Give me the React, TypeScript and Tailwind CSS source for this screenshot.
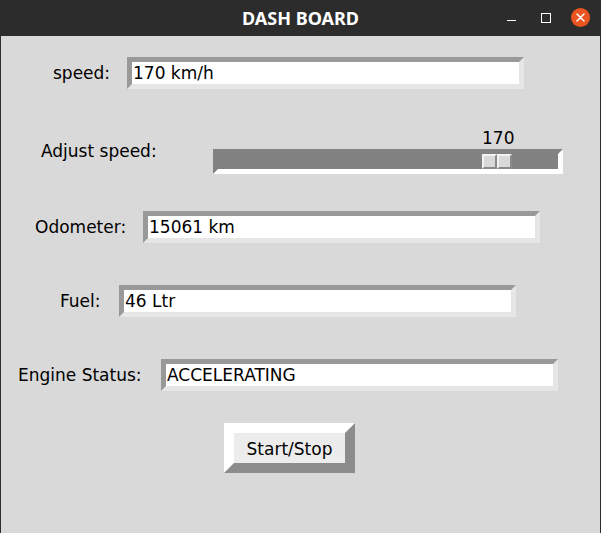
import { FC } from "react";

interface IEntryRowProps {
  label: string;
  value: string;
  top: string;
  labelBox: string;
}

const font = { fontFamily: '"DejaVu Sans", sans-serif' };

const Entry: FC<{ value: string }> = ({ value }) => (
  <div className="w-[397px] h-[32px] bg-white border-[5px] border-t-[#999999] border-l-[#999999] border-b-[#e6e6e6] border-r-[#e6e6e6] flex items-center pl-[1px] pt-[1px] text-[17px] text-black leading-none">
    {value}
  </div>
);

const EntryRow: FC<IEntryRowProps> = ({ label, value, top, labelBox }) => (
  <div className={`flex items-center ${top}`}>
    <div className={`${labelBox} pt-[1px] text-[17px] text-black leading-none`}>{label}</div>
    <Entry value={value} />
  </div>
);

const ThumbHalf = () => (
  <div className="w-[15px] h-[15px] bg-[#d9d9d9] border-[2px] border-t-[#f2f2f2] border-l-[#f2f2f2] border-b-[#8a8a8a] border-r-[#8a8a8a]" />
);

export default function App() {
  return (
    <div className="w-[601px] h-[533px] flex flex-col bg-[#2c2c2c]" style={font}>
      <div className="h-[36px] flex items-center relative shrink-0">
        <div
          className="flex-1 text-center text-white font-bold text-[18px] pt-[1px]"
          style={{ fontFamily: '"Noto Sans", "DejaVu Sans", sans-serif' }}
        >
          DASH BOARD
        </div>
        <div className="absolute right-[11px] top-[8px] flex items-center gap-[20px]">
          <div className="w-[9px] h-[1px] bg-white mt-[6px]" />
          <div className="w-[10px] h-[10px] border border-white ml-[5px]" />
          <div className="w-[19px] h-[19px] rounded-full bg-[#e95420] flex items-center justify-center">
            <svg width="9" height="9" viewBox="0 0 9 9">
              <path d="M1 1 L8 8 M8 1 L1 8" stroke="white" strokeWidth="1.5" strokeLinecap="round" />
            </svg>
          </div>
        </div>
      </div>
      <div className="flex-1 bg-[#d9d9d9] mx-[1px] flex flex-col">
        <EntryRow label="speed:" value="170 km/h" top="mt-[21px]" labelBox="w-[126px] pl-[52px]" />

        <div className="flex items-center mt-[38px]">
          <div className="w-[212px] pl-[40px] pt-[1px] text-[17px] text-black leading-none">Adjust speed:</div>
          <div className="flex flex-col">
            <div className="h-[20px] pl-[269px] pt-[1px] text-[17px] leading-[20px] text-black">170</div>
            <div className="mt-[2px] w-[350px] h-[25px] bg-[#828282] border-[5px] border-t-[#828282] border-l-[#828282] border-b-white border-r-white flex">
              <div className="ml-[264px] flex">
                <ThumbHalf />
                <ThumbHalf />
              </div>
            </div>
          </div>
        </div>

        <EntryRow label="Odometer:" value="15061 km" top="mt-[37px]" labelBox="w-[142px] pl-[34px]" />
        <EntryRow label="Fuel:" value="46 Ltr" top="mt-[42px]" labelBox="w-[118px] pl-[59px]" />
        <EntryRow label="Engine Status:" value="ACCELERATING" top="mt-[42px]" labelBox="w-[160px] pl-[17px]" />

        <div className="mt-[32px] ml-[223px]">
          <div className="w-[131px] h-[50px] bg-[#ececec] border-[10px] border-t-white border-l-white border-b-[#8c8c8c] border-r-[#8c8c8c] flex items-center justify-center pt-[2px] text-[17px] text-black leading-none">
            Start/Stop
          </div>
        </div>
      </div>
    </div>
  );
}
